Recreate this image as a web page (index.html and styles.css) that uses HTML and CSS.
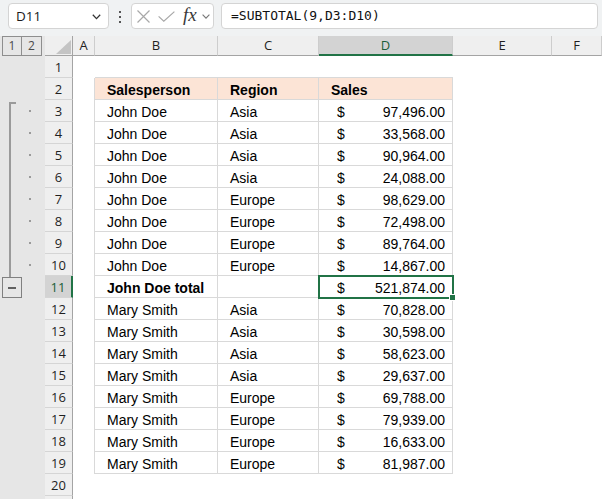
FILE: index.html
```html
<!DOCTYPE html>
<html>
<head>
<meta charset="utf-8">
<link rel="stylesheet" href="styles.css">
</head>
<body>
<div class="toolbar">
  <div class="namebox"><span>D11</span>
    <svg class="chev" width="9" height="6" viewBox="0 0 9 6"><polyline points="0.8,0.8 4.5,4.6 8.2,0.8" fill="none" stroke="#333" stroke-width="1.3"/></svg>
  </div>
  <svg class="vdots" width="4" height="12" viewBox="0 0 4 12"><rect x="1" y="0" width="2" height="2" fill="#555"/><rect x="1" y="5" width="2" height="2" fill="#555"/><rect x="1" y="10" width="2" height="2" fill="#555"/></svg>
  <div class="fxbox">
    <svg class="ic-x" width="13" height="13" viewBox="0 0 13 13"><path d="M0.5 0.5 L12.5 12.5 M12.5 0.5 L0.5 12.5" stroke="#a8a8a8" stroke-width="1.2" fill="none"/></svg>
    <svg class="ic-ok" width="17" height="11" viewBox="0 0 17 11"><polyline points="0.6,5.4 5.8,10.2 16.4,0.6" fill="none" stroke="#a8a8a8" stroke-width="1.2"/></svg>
    <span class="fx">fx</span>
    <svg class="chev2" width="8" height="5" viewBox="0 0 8 5"><polyline points="0.6,0.6 4,4.2 7.4,0.6" fill="none" stroke="#777" stroke-width="1.1"/></svg>
  </div>
  <div class="formula">=SUBTOTAL(9,D3:D10)</div>
</div>

<div class="sheet">
  <div class="outline">
    <div class="olbtns"><div class="olb">1</div><div class="olb">2</div></div>
    <div class="bracket"></div>
    <div class="dot r3"></div><div class="dot r4"></div><div class="dot r5"></div><div class="dot r6"></div>
    <div class="dot r7"></div><div class="dot r8"></div><div class="dot r9"></div><div class="dot r10"></div>
    <div class="minus"><span class="mline"></span></div>
  </div>

  <div class="grid">
    <div class="ch corner"><svg class="tri" width="15" height="14" viewBox="0 0 15 14"><polygon points="15,0 15,14 0,14" fill="#c4c4c4"/></svg></div>
    <div class="ch">A</div><div class="ch">B</div><div class="ch">C</div><div class="ch sel">D</div><div class="ch">E</div><div class="ch">F</div>

    <div class="rh">1</div><div class="c"></div><div class="c tt"></div><div class="c tt"></div><div class="c tt"></div><div class="c"></div><div class="c"></div>

    <div class="rh">2</div><div class="c tl"></div><div class="c t hd pb">Salesperson</div><div class="c t hd pc">Region</div><div class="c t hd pc">Sales</div><div class="c"></div><div class="c"></div>

    <div class="rh">3</div><div class="c tl"></div><div class="c t pb">John Doe</div><div class="c t pc">Asia</div><div class="c t num"><span>$</span><span>97,496.00</span></div><div class="c"></div><div class="c"></div>
    <div class="rh">4</div><div class="c tl"></div><div class="c t pb">John Doe</div><div class="c t pc">Asia</div><div class="c t num"><span>$</span><span>33,568.00</span></div><div class="c"></div><div class="c"></div>
    <div class="rh">5</div><div class="c tl"></div><div class="c t pb">John Doe</div><div class="c t pc">Asia</div><div class="c t num"><span>$</span><span>90,964.00</span></div><div class="c"></div><div class="c"></div>
    <div class="rh">6</div><div class="c tl"></div><div class="c t pb">John Doe</div><div class="c t pc">Asia</div><div class="c t num"><span>$</span><span>24,088.00</span></div><div class="c"></div><div class="c"></div>
    <div class="rh">7</div><div class="c tl"></div><div class="c t pb">John Doe</div><div class="c t pc">Europe</div><div class="c t num"><span>$</span><span>98,629.00</span></div><div class="c"></div><div class="c"></div>
    <div class="rh">8</div><div class="c tl"></div><div class="c t pb">John Doe</div><div class="c t pc">Europe</div><div class="c t num"><span>$</span><span>72,498.00</span></div><div class="c"></div><div class="c"></div>
    <div class="rh">9</div><div class="c tl"></div><div class="c t pb">John Doe</div><div class="c t pc">Europe</div><div class="c t num"><span>$</span><span>89,764.00</span></div><div class="c"></div><div class="c"></div>
    <div class="rh">10</div><div class="c tl"></div><div class="c t pb">John Doe</div><div class="c t pc">Europe</div><div class="c t num"><span>$</span><span>14,867.00</span></div><div class="c"></div><div class="c"></div>
    <div class="rh rsel">11</div><div class="c tl"></div><div class="c t pb bold">John Doe total</div><div class="c t pc"></div><div class="c t num active"><span>$</span><span>521,874.00</span><i class="handle"></i></div><div class="c"></div><div class="c"></div>
    <div class="rh">12</div><div class="c tl"></div><div class="c t pb">Mary Smith</div><div class="c t pc">Asia</div><div class="c t num"><span>$</span><span>70,828.00</span></div><div class="c"></div><div class="c"></div>
    <div class="rh">13</div><div class="c tl"></div><div class="c t pb">Mary Smith</div><div class="c t pc">Asia</div><div class="c t num"><span>$</span><span>30,598.00</span></div><div class="c"></div><div class="c"></div>
    <div class="rh">14</div><div class="c tl"></div><div class="c t pb">Mary Smith</div><div class="c t pc">Asia</div><div class="c t num"><span>$</span><span>58,623.00</span></div><div class="c"></div><div class="c"></div>
    <div class="rh">15</div><div class="c tl"></div><div class="c t pb">Mary Smith</div><div class="c t pc">Asia</div><div class="c t num"><span>$</span><span>29,637.00</span></div><div class="c"></div><div class="c"></div>
    <div class="rh">16</div><div class="c tl"></div><div class="c t pb">Mary Smith</div><div class="c t pc">Europe</div><div class="c t num"><span>$</span><span>69,788.00</span></div><div class="c"></div><div class="c"></div>
    <div class="rh">17</div><div class="c tl"></div><div class="c t pb">Mary Smith</div><div class="c t pc">Europe</div><div class="c t num"><span>$</span><span>79,939.00</span></div><div class="c"></div><div class="c"></div>
    <div class="rh">18</div><div class="c tl"></div><div class="c t pb">Mary Smith</div><div class="c t pc">Europe</div><div class="c t num"><span>$</span><span>16,633.00</span></div><div class="c"></div><div class="c"></div>
    <div class="rh">19</div><div class="c tl"></div><div class="c t pb">Mary Smith</div><div class="c t pc">Europe</div><div class="c t num"><span>$</span><span>81,987.00</span></div><div class="c"></div><div class="c"></div>
    <div class="rh">20</div><div class="c"></div><div class="c"></div><div class="c"></div><div class="c"></div><div class="c"></div><div class="c"></div>
    <div class="rh"></div><div class="c"></div><div class="c"></div><div class="c"></div><div class="c"></div><div class="c"></div><div class="c"></div>
  </div>
</div>
</body>
</html>
```

FILE: styles.css
```css
html, body {
  margin: 0;
  padding: 0;
}
body {
  width: 602px;
  height: 499px;
  overflow: hidden;
  background: #ffffff;
  font-family: "Liberation Sans", Arial, sans-serif;
  color: #000;
}

/* ---------- formula bar ---------- */
.toolbar {
  height: 36px;
  box-sizing: border-box;
  background: #f0f2f3;
  display: flex;
  align-items: flex-start;
  padding: 3px 0 0 8px;
}
.namebox {
  width: 101px;
  height: 26px;
  box-sizing: border-box;
  border: 1px solid #d4d4d4;
  border-radius: 4px;
  background: #fff;
  display: flex;
  align-items: center;
  justify-content: space-between;
  padding: 0 7px 0 7px;
  font-family: "Open Sans", sans-serif;
  font-size: 13.5px;
  color: #1a1a1a;
}
.chev {
  margin-top: 1px;
}
.vdots {
  margin: 8px 9px 0 9px;
}
.fxbox {
  width: 83px;
  height: 26px;
  box-sizing: border-box;
  border: 1px solid #d4d4d4;
  border-radius: 4px;
  background: #fff;
  display: flex;
  align-items: center;
  padding-left: 5px;
}
.ic-x {
  margin-right: 8px;
}
.ic-ok {
  margin-right: 8px;
}
.fx {
  font-family: "Liberation Serif", serif;
  font-style: italic;
  font-size: 19px;
  color: #3a3a3a;
  line-height: 20px;
  margin-top: -3px;
  margin-right: 5px;
}
.chev2 {
  margin-top: 1px;
}
.formula {
  flex: 1;
  margin-left: 7px;
  margin-right: 4px;
  height: 26px;
  box-sizing: border-box;
  border: 1px solid #d4d4d4;
  border-radius: 4px;
  background: #fff;
  padding-left: 9px;
  font-family: "DejaVu Sans Mono", monospace;
  font-size: 13px;
  line-height: 24px;
  color: #111;
}

/* ---------- sheet ---------- */
.sheet {
  display: flex;
}
.outline {
  width: 45px;
  background: #e6e6e6;
  display: grid;
  grid-template-columns: 45px;
  grid-template-rows: 20px repeat(21, 22px);
}
.olbtns {
  grid-row: 1;
  grid-column: 1;
  display: flex;
  padding-left: 2px;
}
.olb {
  width: 20px;
  height: 20px;
  box-sizing: border-box;
  border: 1px solid #8e8e8e;
  font-family: "Open Sans", sans-serif;
  font-size: 12px;
  line-height: 18px;
  text-align: center;
  color: #4a4a4a;
}
.olb + .olb {
  border-left: none;
}
.bracket {
  grid-column: 1;
  grid-row: 4 / 12;
  margin: 2px 0 0 9px;
  width: 5px;
  border-left: 2px solid #9a9a9a;
  border-top: 2px solid #9a9a9a;
  height: 174px;
}
.dot {
  grid-column: 1;
  width: 2px;
  height: 2px;
  background: #9a9a9a;
  margin-left: 29px;
  align-self: center;
}
.r3 { grid-row: 4; }
.r4 { grid-row: 5; }
.r5 { grid-row: 6; }
.r6 { grid-row: 7; }
.r7 { grid-row: 8; }
.r8 { grid-row: 9; }
.r9 { grid-row: 10; }
.r10 { grid-row: 11; }
.minus {
  grid-column: 1;
  grid-row: 12;
  margin: 1px 0 0 2px;
  width: 20px;
  height: 21px;
  box-sizing: border-box;
  border: 1px solid #808080;
  display: flex;
  align-items: center;
  justify-content: center;
}
.mline {
  width: 8px;
  height: 2px;
  background: #606060;
}

.grid {
  display: grid;
  grid-template-columns: 28px 22px 123px 101px 134px 99px 50px;
  grid-template-rows: 20px repeat(21, 22px);
}
.ch {
  box-sizing: border-box;
  background: #efefef;
  border-right: 1px solid #cdcdcd;
  border-bottom: 1px solid #a4a4a4;
  font-family: "Open Sans", sans-serif;
  font-size: 13px;
  line-height: 19px;
  text-align: center;
  color: #1f1f1f;
}
.corner {
  position: relative;
  border-right: 1px solid #a4a4a4;
}
.tri {
  position: absolute;
  right: 1px;
  bottom: 1px;
}
.ch.sel {
  background: #d3d3d3;
  border-bottom: 2px solid #217346;
  color: #1b5e38;
}
.rh {
  box-sizing: border-box;
  background: #efefef;
  border-right: 1px solid #a4a4a4;
  border-bottom: 1px solid #d5d5d5;
  font-family: "Open Sans", sans-serif;
  font-size: 13px;
  line-height: 22px;
  text-align: center;
  color: #1f1f1f;
}
.rh.rsel {
  background: #d3d3d3;
  border-right: 2px solid #217346;
  color: #1b5e38;
}

.c {
  box-sizing: border-box;
  font-size: 14px;
  line-height: 22px;
  padding-top: 1px;
  white-space: nowrap;
  overflow: visible;
  position: relative;
}
.t {
  border-right: 1px solid #d9d9d9;
  border-bottom: 1px solid #d9d9d9;
}
.tl {
  border-right: 1px solid #d9d9d9;
}
.tt {
  border-bottom: 1px solid #d9d9d9;
}
.hd {
  background: #fce4d6;
  font-weight: bold;
}
.bold {
  font-weight: bold;
}
.pb {
  padding-left: 12px;
}
.pc {
  padding-left: 12px;
}
.num {
  display: flex;
  justify-content: space-between;
  padding-left: 18px;
  padding-right: 7px;
}
.active {
  outline: 2px solid #217346;
  outline-offset: -1px;
  z-index: 2;
}
.handle {
  position: absolute;
  right: -4px;
  bottom: -4px;
  width: 5px;
  height: 5px;
  background: #217346;
  border: 1px solid #fff;
}
```
